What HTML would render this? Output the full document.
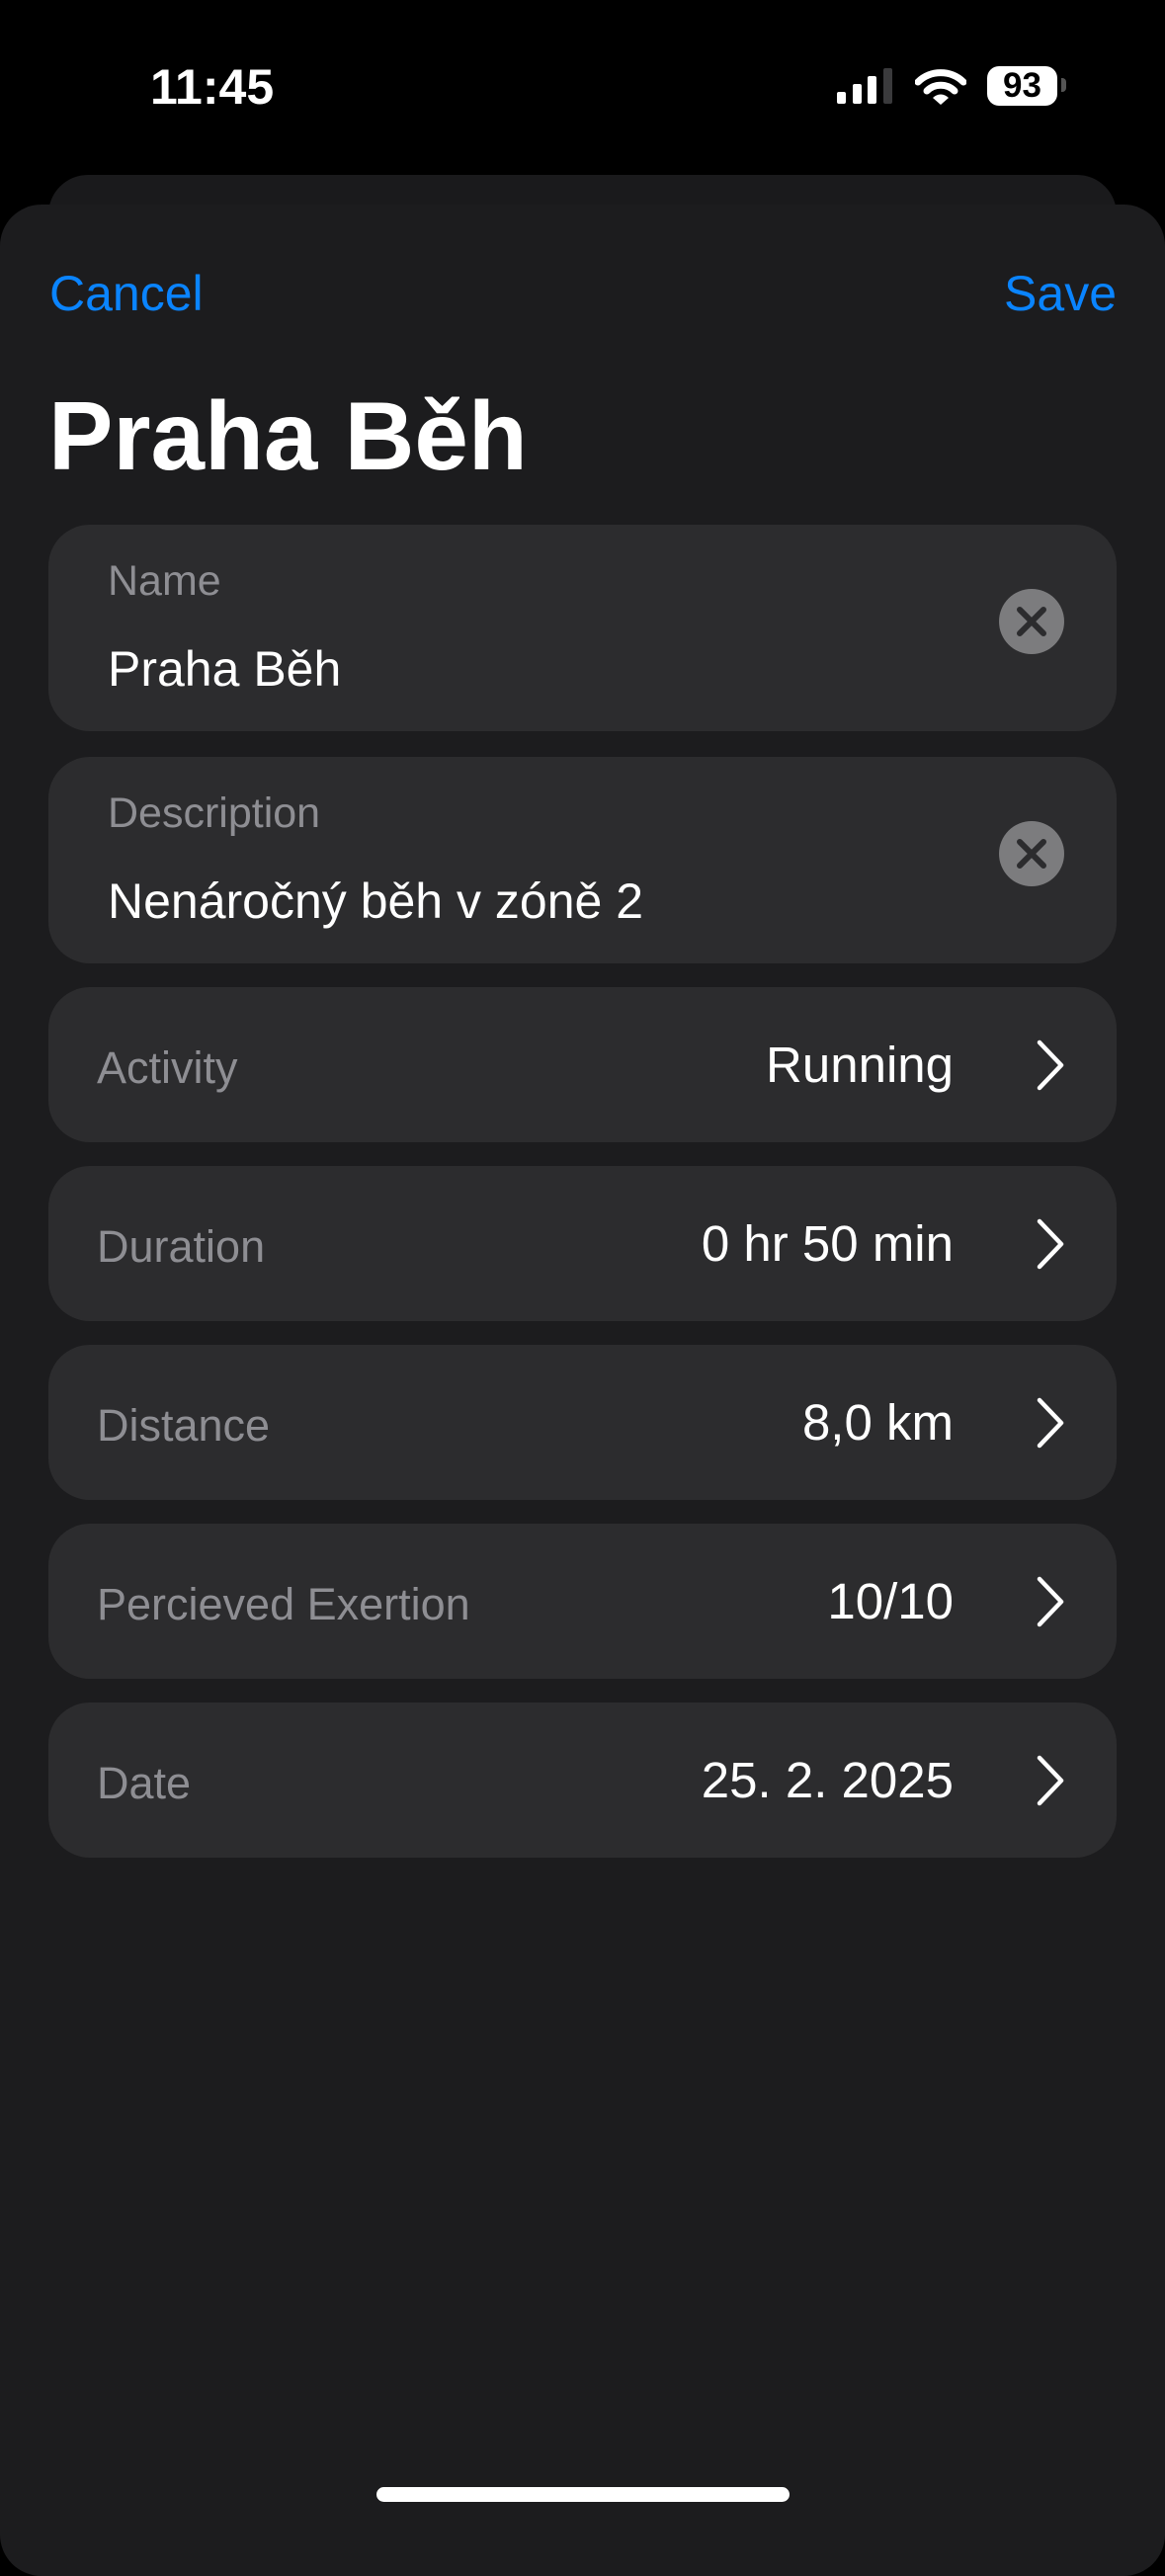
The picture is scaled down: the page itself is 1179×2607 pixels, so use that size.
<!DOCTYPE html>
<html><head><meta charset="utf-8"><style>
*{margin:0;padding:0;box-sizing:border-box}
html,body{width:1179px;height:2556px;background:#000;overflow:hidden;font-family:"Liberation Sans",sans-serif}
.abs{position:absolute}
.back{left:49px;top:177px;width:1081px;height:100px;background:#1a1a1c;border-radius:40px}
.sheet{left:0;top:207px;width:1179px;height:2400px;background:#1c1c1e;border-radius:42px}
.nav{font-size:50px;color:#0a84ff;line-height:1}
.title{font-size:98px;font-weight:bold;color:#fff;left:49px;top:392px;line-height:1}
.card{left:49px;width:1081px;background:#2c2c2e;border-radius:42px}
.lbl{font-size:43px;color:#8e8e93;line-height:1}
.val{font-size:50px;color:#fff;line-height:1}
.clr{width:66px;height:66px;border-radius:50%;background:#7c7c7e;left:962px}
.row .lbl{left:49px;top:59px;font-size:45px}
.row .val{right:165px;top:53px;font-size:51px}
.chev{right:52px;top:53px}
</style></head><body>
<div class="abs" style="left:152px;top:63px;font-size:50px;font-weight:bold;color:#fff;line-height:1">11:45</div>
<div class="abs" style="left:847px;top:93px;width:9px;height:12px;background:#fff;border-radius:2px"></div>
<div class="abs" style="left:863px;top:85px;width:9px;height:20px;background:#fff;border-radius:2px"></div>
<div class="abs" style="left:878px;top:77px;width:9px;height:28px;background:#fff;border-radius:2px"></div>
<div class="abs" style="left:894px;top:69px;width:9px;height:36px;background:#3a3a3c;border-radius:2px"></div>
<svg class="abs" style="left:926px;top:70px" width="52" height="38" viewBox="0 0 52 38">
<path d="M3 13 A33 33 0 0 1 49 13" stroke="#fff" stroke-width="7" fill="none" stroke-linecap="round"/>
<path d="M12 22 A20 20 0 0 1 40 22" stroke="#fff" stroke-width="7" fill="none" stroke-linecap="round"/>
<path d="M26 36 L18 29 A11 11 0 0 1 34 29 Z" fill="#fff"/>
</svg>
<div class="abs" style="left:999px;top:67px;width:71px;height:40px;background:#fff;border-radius:12px;color:#000;font-weight:bold;font-size:35px;text-align:center;line-height:40px">93</div>
<div class="abs" style="left:1074px;top:79px;width:5px;height:14px;background:#555;border-radius:0 4px 4px 0"></div>

<div class="abs back"></div>
<div class="abs sheet"></div>
<div class="abs nav" style="left:50px;top:272px">Cancel</div>
<div class="abs nav" style="right:49px;top:272px">Save</div>
<div class="abs title">Praha Běh</div>

<div class="abs card" style="top:531px;height:209px">
 <div class="abs lbl" style="left:60px;top:36px">Name</div>
 <div class="abs val" style="left:60px;top:121px">Praha Běh</div>
 <div class="abs clr" style="top:65px"><svg width="66" height="66"><path d="M21 21L45 45M45 21L21 45" stroke="#2c2c2e" stroke-width="6" stroke-linecap="round"/></svg></div>
</div>
<div class="abs card" style="top:766px;height:209px">
 <div class="abs lbl" style="left:60px;top:36px">Description</div>
 <div class="abs val" style="left:60px;top:121px">Nenáročný běh v zóně 2</div>
 <div class="abs clr" style="top:65px"><svg width="66" height="66"><path d="M21 21L45 45M45 21L21 45" stroke="#2c2c2e" stroke-width="6" stroke-linecap="round"/></svg></div>
</div>

<div class="abs card row" style="top:999px;height:157px"><div class="abs lbl">Activity</div><div class="abs val">Running</div><svg class="abs chev" width="30" height="52"><path d="M4 3L26 26L4 49" stroke="#fff" stroke-width="4.5" fill="none" stroke-linecap="round" stroke-linejoin="round"/></svg></div>
<div class="abs card row" style="top:1180px;height:157px"><div class="abs lbl">Duration</div><div class="abs val">0 hr 50 min</div><svg class="abs chev" width="30" height="52"><path d="M4 3L26 26L4 49" stroke="#fff" stroke-width="4.5" fill="none" stroke-linecap="round" stroke-linejoin="round"/></svg></div>
<div class="abs card row" style="top:1361px;height:157px"><div class="abs lbl">Distance</div><div class="abs val">8,0 km</div><svg class="abs chev" width="30" height="52"><path d="M4 3L26 26L4 49" stroke="#fff" stroke-width="4.5" fill="none" stroke-linecap="round" stroke-linejoin="round"/></svg></div>
<div class="abs card row" style="top:1542px;height:157px"><div class="abs lbl">Percieved Exertion</div><div class="abs val">10/10</div><svg class="abs chev" width="30" height="52"><path d="M4 3L26 26L4 49" stroke="#fff" stroke-width="4.5" fill="none" stroke-linecap="round" stroke-linejoin="round"/></svg></div>
<div class="abs card row" style="top:1723px;height:157px"><div class="abs lbl">Date</div><div class="abs val">25. 2. 2025</div><svg class="abs chev" width="30" height="52"><path d="M4 3L26 26L4 49" stroke="#fff" stroke-width="4.5" fill="none" stroke-linecap="round" stroke-linejoin="round"/></svg></div>

<div class="abs" style="left:381px;top:2517px;width:418px;height:15px;background:#fff;border-radius:8px"></div>
</body></html>
